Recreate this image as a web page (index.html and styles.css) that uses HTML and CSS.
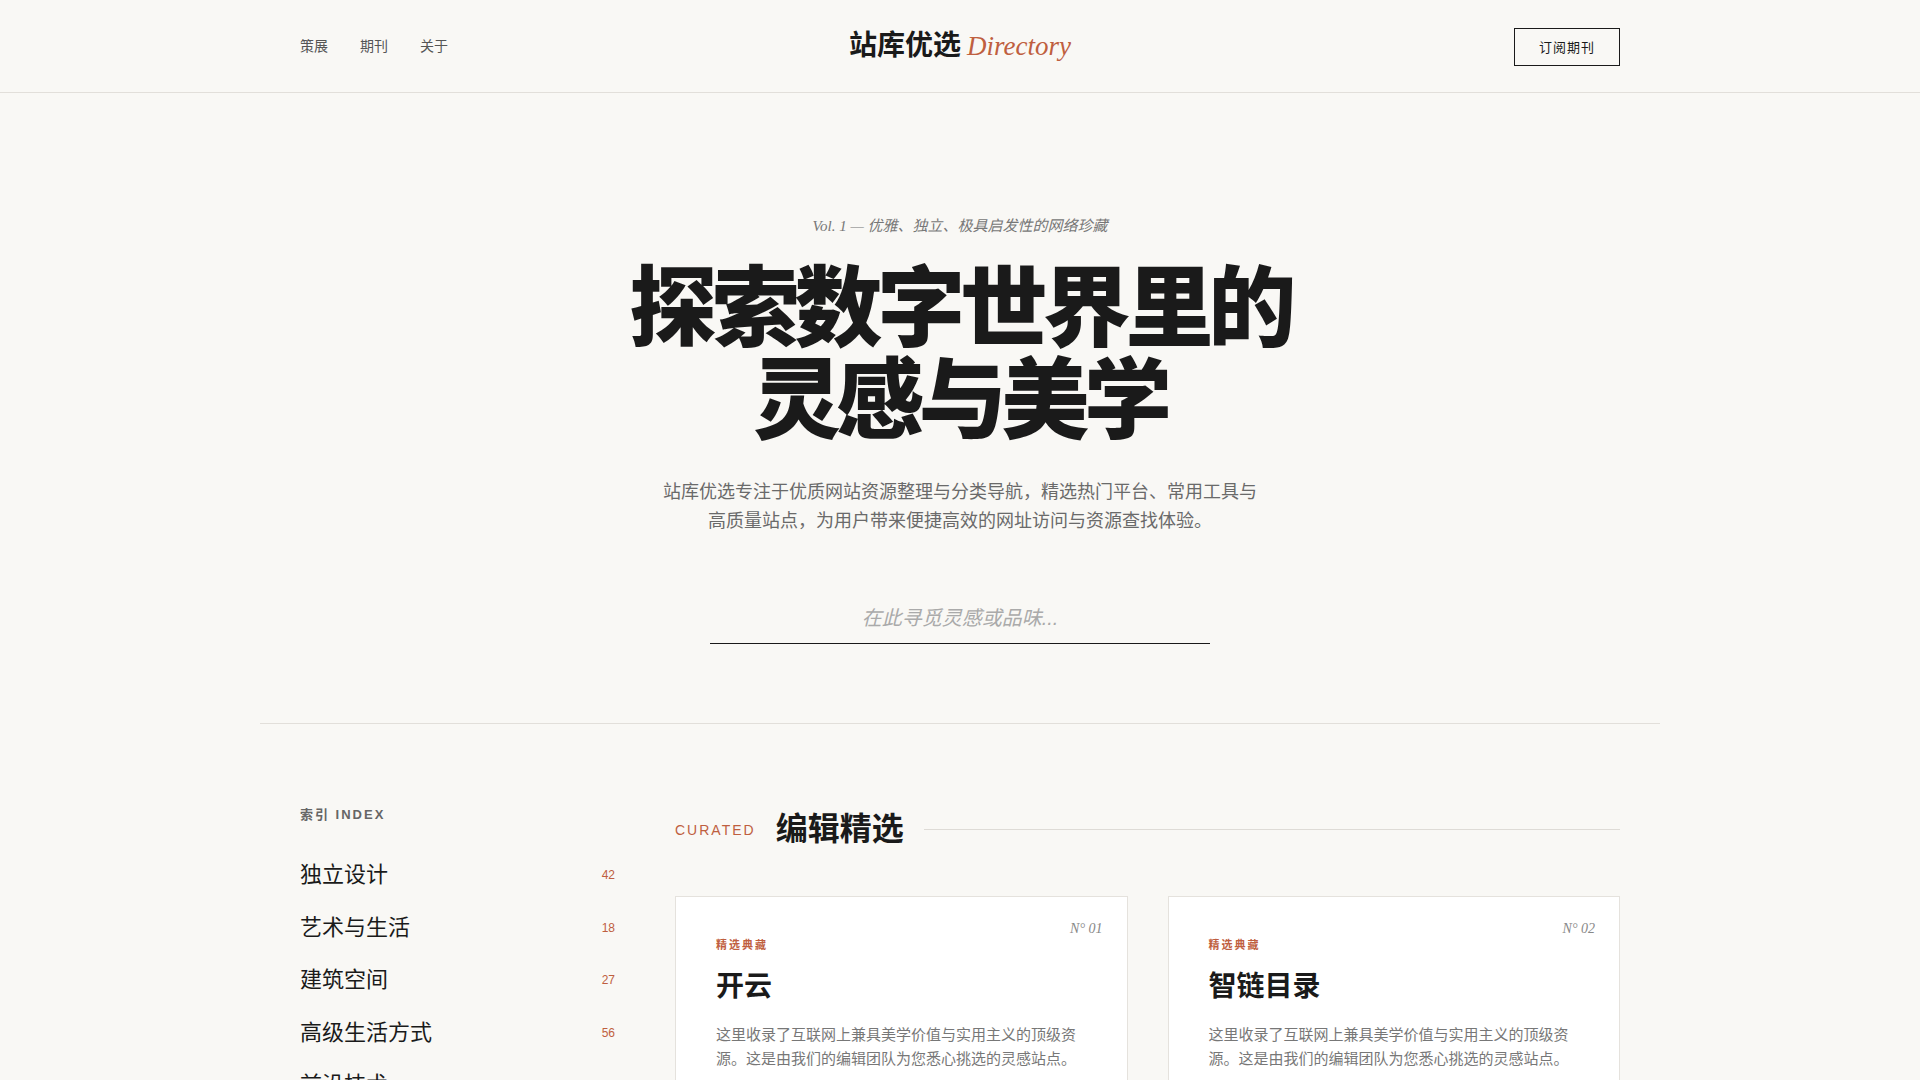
FILE: index.html
```html
<!DOCTYPE html>
<html lang="zh-CN">
<head>
<meta charset="utf-8">
<title>站库优选 Directory</title>
<link rel="stylesheet" href="styles.css">
</head>
<body>
<header class="site-header">
  <div class="header-inner">
    <nav class="main-nav">
      <a href="#">策展</a>
      <a href="#">期刊</a>
      <a href="#">关于</a>
    </nav>
    <a class="logo" href="#"><span class="logo-cn">站库优选</span> <span class="logo-en">Directory</span></a>
    <div class="header-actions">
      <a class="btn-subscribe" href="#">订阅期刊</a>
    </div>
  </div>
</header>

<main class="container">
  <section class="hero">
    <p class="hero-kicker">Vol. 1 — 优雅、独立、极具启发性的网络珍藏</p>
    <h1 class="hero-title">探索数字世界里的<br>灵感与美学</h1>
    <p class="hero-desc">站库优选专注于优质网站资源整理与分类导航，精选热门平台、常用工具与高质量站点，为用户带来便捷高效的网址访问与资源查找体验。</p>
    <div class="search">
      <input class="search-input" type="text" placeholder="在此寻觅灵感或品味...">
    </div>
  </section>

  <section class="content">
    <aside class="sidebar">
      <h4 class="index-label">索引 INDEX</h4>
      <ul class="index-list">
        <li><a href="#"><span class="index-name">独立设计</span><span class="index-count">42</span></a></li>
        <li><a href="#"><span class="index-name">艺术与生活</span><span class="index-count">18</span></a></li>
        <li><a href="#"><span class="index-name">建筑空间</span><span class="index-count">27</span></a></li>
        <li><a href="#"><span class="index-name">高级生活方式</span><span class="index-count">56</span></a></li>
        <li><a href="#"><span class="index-name">前沿技术</span><span class="index-count">33</span></a></li>
      </ul>
    </aside>

    <div class="main-col">
      <div class="section-head">
        <span class="section-tag">CURATED</span>
        <h2 class="section-title">编辑精选</h2>
        <span class="section-rule"></span>
      </div>

      <div class="card-grid">
        <article class="card">
          <span class="card-no">N° 01</span>
          <p class="card-label">精选典藏</p>
          <h3 class="card-title">开云</h3>
          <p class="card-desc">这里收录了互联网上兼具美学价值与实用主义的顶级资源。这是由我们的编辑团队为您悉心挑选的灵感站点。</p>
          <a class="card-link" href="#">访问站点 →</a>
        </article>
        <article class="card">
          <span class="card-no">N° 02</span>
          <p class="card-label">精选典藏</p>
          <h3 class="card-title">智链目录</h3>
          <p class="card-desc">这里收录了互联网上兼具美学价值与实用主义的顶级资源。这是由我们的编辑团队为您悉心挑选的灵感站点。</p>
          <a class="card-link" href="#">访问站点 →</a>
        </article>
      </div>
    </div>
  </section>
</main>
</body>
</html>
```
FILE: styles.css
```css
* {
  box-sizing: border-box;
}

html, body {
  margin: 0;
  padding: 0;
}

body {
  background: #f9f8f5;
  color: #1a1a1a;
  font-family: "Liberation Sans", "Noto Sans CJK SC", sans-serif;
}

a {
  color: inherit;
  text-decoration: none;
}

/* Header */
.site-header {
  border-bottom: 1px solid #e2dfda;
  background: #f9f8f5;
}

.header-inner {
  max-width: 1400px;
  margin: 0 auto;
  padding: 0 40px;
  height: 92px;
  display: grid;
  grid-template-columns: 1fr auto 1fr;
  align-items: center;
}

.main-nav {
  display: flex;
  gap: 32px;
  font-size: 14px;
  color: #555;
  margin-top: -3px;
}

.logo {
  display: flex;
  align-items: baseline;
  gap: 6px;
  font-size: 28px;
  line-height: 1;
}

.logo-cn {
  font-weight: 700;
  color: #1a1a1a;
}

.logo-en {
  font-family: "Liberation Serif", serif;
  font-style: italic;
  color: #bf5f3f;
  font-size: 27px;
}

.header-actions {
  display: flex;
  justify-content: flex-end;
}

.btn-subscribe {
  display: inline-block;
  border: 1px solid #1a1a1a;
  padding: 11px 24px 10px;
  font-size: 13px;
  letter-spacing: 1px;
  line-height: 15px;
  color: #1a1a1a;
  margin-top: 1px;
}

/* Layout */
.container {
  max-width: 1400px;
  margin: 0 auto;
}

/* Hero */
.hero {
  text-align: center;
  padding: 122px 40px 79px;
  border-bottom: 1px solid #e2dfda;
}

.hero-kicker {
  margin: 0;
  font-family: "Liberation Serif", "Noto Sans CJK SC", serif;
  font-style: italic;
  font-size: 15px;
  line-height: 22px;
  color: #777;
}

.hero-title {
  margin: 18px 0 0;
  font-family: "Noto Sans CJK SC", sans-serif;
  font-weight: 900;
  font-size: 88px;
  line-height: 92px;
  letter-spacing: -0.06em;
  color: #1a1a1a;
}

.hero-desc {
  margin: 39px auto 0;
  max-width: 600px;
  font-size: 18px;
  line-height: 28.5px;
  color: #6a6a6a;
}

.search {
  margin: 54px auto 0;
  width: 500px;
}

.search-input {
  display: block;
  width: 100%;
  border: none;
  border-bottom: 1.5px solid #1a1a1a;
  background: transparent;
  padding: 14px 0 10px;
  font-family: "Liberation Sans", "Noto Sans CJK SC", sans-serif;
  font-size: 20px;
  line-height: 30px;
  font-style: italic;
  text-align: center;
  color: #1a1a1a;
  outline: none;
}

.search-input::placeholder {
  color: #aaa;
  font-style: italic;
}

/* Content */
.content {
  display: grid;
  grid-template-columns: 315px 1fr;
  gap: 60px;
  padding: 80px 40px 80px;
}

.sidebar {
  padding-top: 1px;
}

.index-label {
  margin: 0 0 24px;
  font-size: 13px;
  line-height: 20px;
  letter-spacing: 2px;
  font-weight: 700;
  color: #666;
}

.index-list {
  list-style: none;
  margin: 0;
  padding: 0;
}

.index-list a {
  display: flex;
  justify-content: space-between;
  align-items: center;
  padding: 12px 0;
}

.index-name {
  font-size: 22px;
  line-height: 28.5px;
  color: #1a1a1a;
}

.index-count {
  font-size: 12px;
  color: #bf5f3f;
}

.section-head {
  display: flex;
  align-items: center;
  gap: 20px;
  margin-bottom: 41px;
}

.section-tag {
  font-size: 14px;
  letter-spacing: 2px;
  color: #bf5f3f;
}

.section-title {
  margin: 0;
  font-size: 32px;
  line-height: 51px;
  font-weight: 700;
  color: #1a1a1a;
}

.section-rule {
  flex: 1;
  height: 1px;
  background: #dedbd6;
}

.card-grid {
  display: grid;
  grid-template-columns: 1fr 1fr;
  gap: 40px;
}

.card {
  position: relative;
  background: #fff;
  border: 1px solid #e5e2dd;
  padding: 40px 40px 36px;
}

.card-no {
  position: absolute;
  top: 24px;
  right: 24px;
  font-family: "Liberation Serif", serif;
  font-style: italic;
  font-size: 14px;
  color: #888;
}

.card-label {
  margin: 0;
  font-size: 11px;
  line-height: 16px;
  letter-spacing: 2px;
  font-weight: 700;
  color: #bf5f3f;
}

.card-title {
  margin: 16px 0 0;
  font-size: 28px;
  line-height: 36px;
  font-weight: 700;
  color: #1a1a1a;
}

.card-desc {
  margin: 18px 0 0;
  font-size: 15px;
  line-height: 24px;
  color: #777;
}

.card-link {
  display: inline-block;
  margin-top: 24px;
  font-size: 13px;
  letter-spacing: 1px;
  color: #1a1a1a;
  border-bottom: 1px solid #1a1a1a;
  padding-bottom: 2px;
}
```
